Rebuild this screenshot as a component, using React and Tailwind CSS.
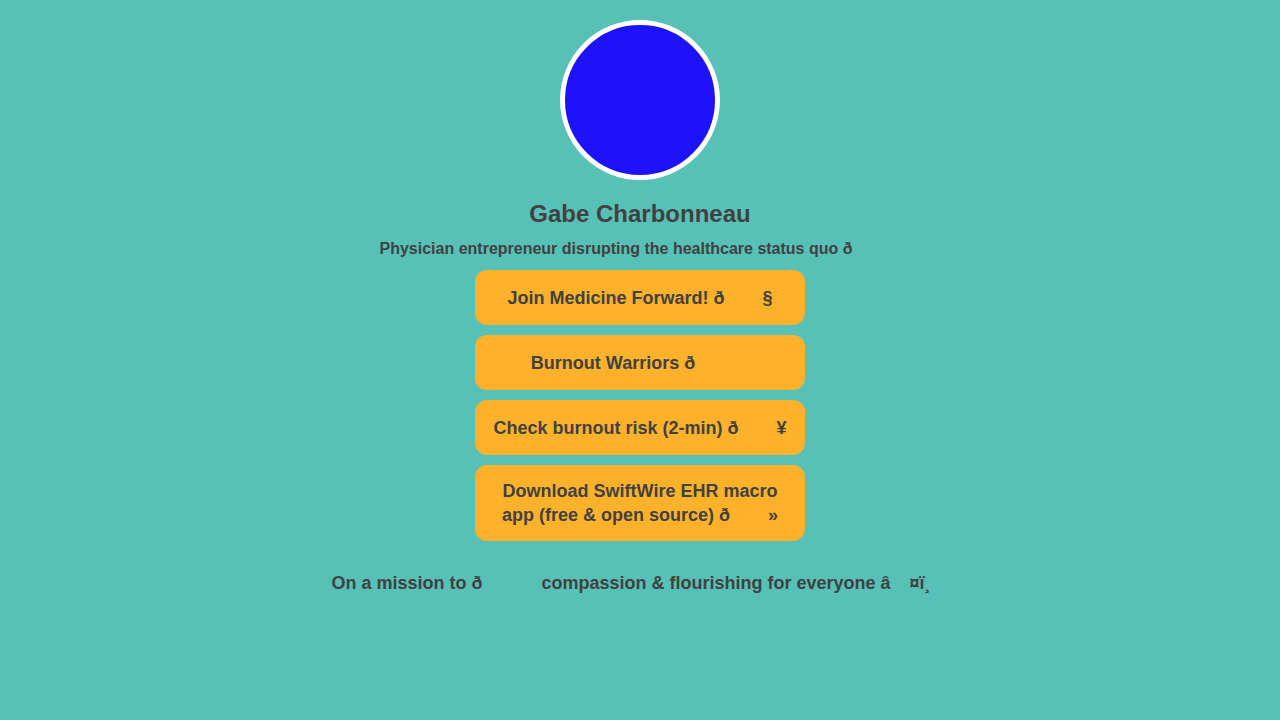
const font = { fontFamily: '"Liberation Sans", Arial, sans-serif' };

function Gap({ w }) {
  return <span className={`inline-block ${w}`} />;
}

function LinkButton({ children, tall }) {
  return (
    <a
      href="#"
      className={`w-[330px] flex items-center justify-center text-center rounded-xl bg-[#feb22b] text-[#414141] font-bold text-[18px] leading-6 px-4 ${tall ? 'py-[14px]' : 'h-[55px] whitespace-nowrap'}`}
    >
      <span>{children}</span>
    </a>
  );
}

export default function App() {
  return (
    <div className="min-h-[720px] w-full bg-[#57c1b7] text-[#414141]" style={font}>
      <div className="flex flex-col items-center pt-5">
        {/* avatar */}
        <div className="w-40 h-40 rounded-full border-[5px] border-white bg-[#1d12f8]" />

        <h1 className="mt-5 text-[24px] leading-7 font-bold">Gabe Charbonneau</h1>
        <p className="mt-[11px] text-[16px] leading-5 font-bold">
          Physician entrepreneur disrupting the healthcare status quo ð<Gap w="w-[48px]" />
        </p>

        <div className="mt-[11px] flex flex-col gap-[10px]">
          <LinkButton>
            Join Medicine Forward! ð<Gap w="w-[38px]" />§
          </LinkButton>
          <LinkButton>
            Burnout Warriors ð<Gap w="w-[54px]" />
          </LinkButton>
          <LinkButton>
            Check burnout risk (2-min) ð<Gap w="w-[38px]" />¥
          </LinkButton>
          <LinkButton tall>
            Download SwiftWire EHR macro
            <br />
            app (free &amp; open source) ð<Gap w="w-[38px]" />»
          </LinkButton>
        </div>

        <p className="mt-[31px] text-[18px] leading-[22px] font-bold">
          On a mission to ð<Gap w="w-[59px]" />compassion &amp; flourishing for everyone â<Gap w="w-[19px]" />¤ï¸<Gap w="w-[18px]" />
        </p>
      </div>
    </div>
  );
}
